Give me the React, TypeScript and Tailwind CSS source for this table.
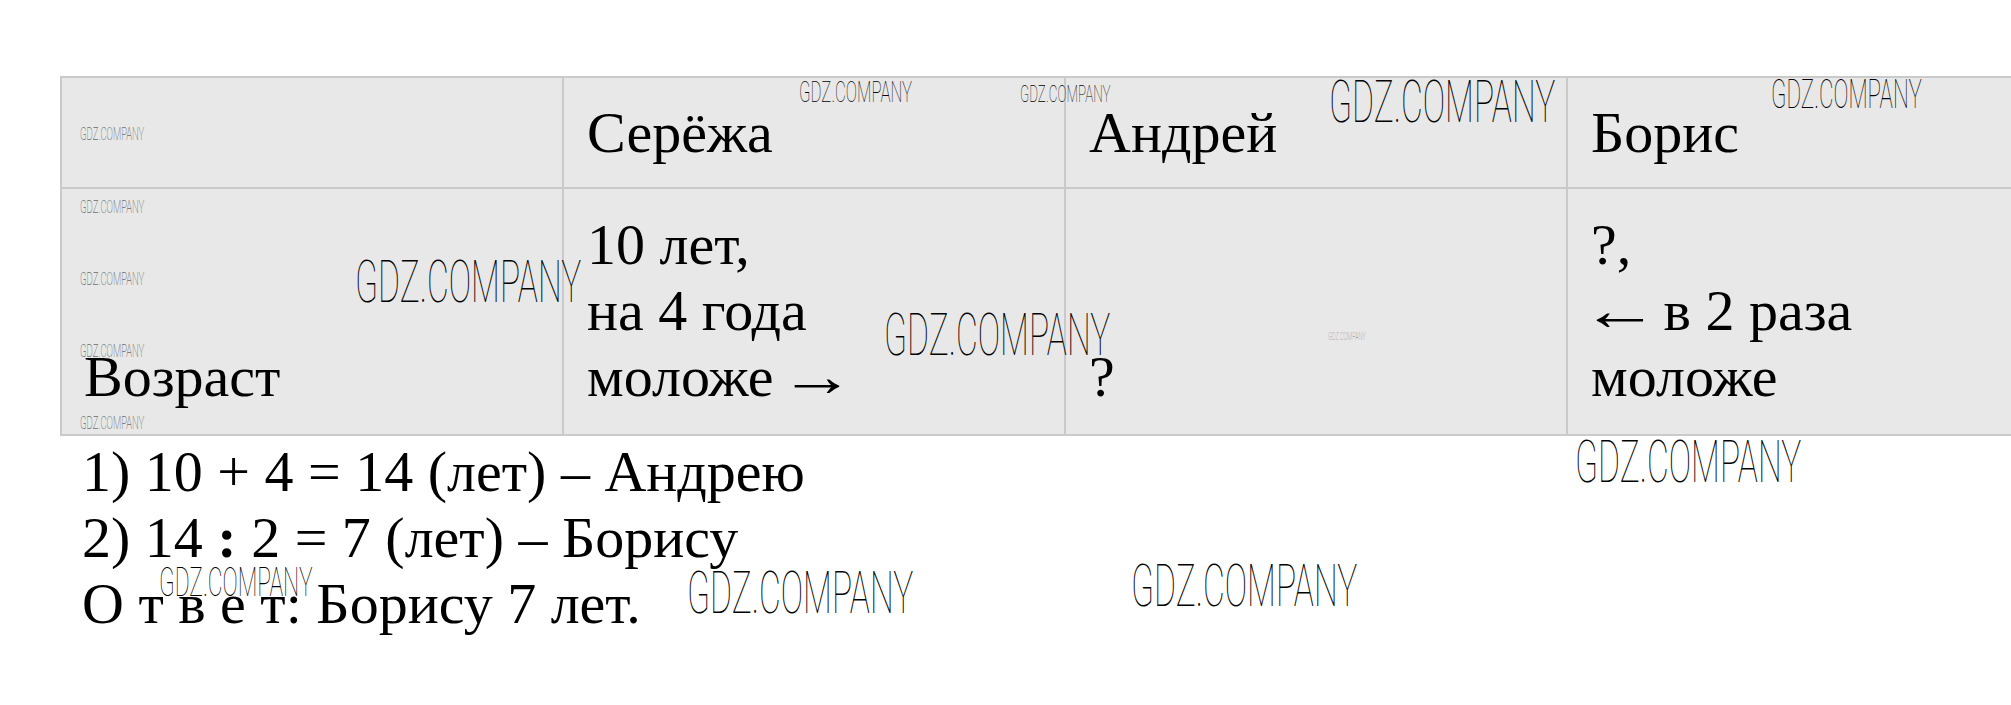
import React from "react";

const serif = "font-['Liberation_Serif','Times_New_Roman',serif]";

function Wm({ className }: { className: string }) {
  return (
    <span
      className={
        "pointer-events-none absolute whitespace-nowrap font-['Roboto','Inter',sans-serif] font-thin leading-none origin-top-left " +
        className
      }
    >
      GDZ.COMPANY
    </span>
  );
}

function HeadCell({ children, first }: { children?: React.ReactNode; first?: boolean }) {
  return (
    <div className={"flex h-[109px] items-center bg-[#e8e8e8] " + (first ? "pl-[22px]" : "pl-[23px]")}>
      {children}
    </div>
  );
}

function BodyCell({ lines, first }: { lines: React.ReactNode[]; first?: boolean }) {
  return (
    <div
      className={
        "flex h-[245px] flex-col justify-end bg-[#e8e8e8] pt-[23px] pb-[24px] " +
        (first ? "pl-[22px]" : "pl-[23px]")
      }
    >
      {lines.map((l, i) => (
        <div key={i} className="whitespace-nowrap">
          {l}
        </div>
      ))}
    </div>
  );
}

export default function App() {
  return (
    <div className={"relative h-[705px] w-[2011px] overflow-hidden bg-white text-black " + serif}>
      <div className="pt-[76px] pl-[60px] text-[58px] leading-[66px]">
        <div className="grid w-max grid-cols-[500px_500px_500px_500px] gap-[2px] bg-[#cacaca] p-[2px]">
          <HeadCell first />
          <HeadCell>Серёжа</HeadCell>
          <HeadCell>Андрей</HeadCell>
          <HeadCell>Борис</HeadCell>
          <BodyCell first lines={["Возраст"]} />
          <BodyCell
            lines={[
              "10 лет,",
              "на 4 года",
              <>
                моложе <span className="inline-block origin-center scale-x-[1.3]">→</span>
              </>,
            ]}
          />
          <BodyCell lines={["?"]} />
          <BodyCell
            lines={[
              "?,",
              <>
                <span className="inline-block origin-center scale-x-[1.35]">←</span> в 2 раза
              </>,
              "моложе",
            ]}
          />
        </div>
        <div className="mt-[3px] pl-[22px]">
          <div className="whitespace-nowrap">1) 10 + 4 = 14 (лет) – Андрею</div>
          <div className="whitespace-nowrap">
            2) 14 <span className="font-bold">:</span> 2 = 7 (лет) – Борису
          </div>
          <div className="whitespace-nowrap">О т в е т: Борису 7 лет.</div>
        </div>
      </div>

      {/* watermarks (overlay) */}
      <Wm className="left-[355px] top-[252px] text-[60px] scale-x-[0.56]" />
      <Wm className="left-[884px] top-[305px] text-[60px] scale-x-[0.56]" />
      <Wm className="left-[1329px] top-[72px] text-[60px] scale-x-[0.56]" />
      <Wm className="left-[1575px] top-[432px] text-[60px] scale-x-[0.56]" />
      <Wm className="left-[687px] top-[563px] text-[60px] scale-x-[0.56]" />
      <Wm className="left-[1131px] top-[556px] text-[60px] scale-x-[0.56]" />
      <Wm className="left-[799px] top-[77px] text-[30px] scale-x-[0.56]" />
      <Wm className="left-[1020px] top-[82px] text-[24px] scale-x-[0.56]" />
      <Wm className="left-[1771px] top-[75px] text-[40px] scale-x-[0.56]" />
      <Wm className="left-[159px] top-[563px] text-[40px] scale-x-[0.57]" />
      <Wm className="left-[80px] top-[125px] text-[18px] scale-x-[0.53] text-[#333]" />
      <Wm className="left-[80px] top-[198px] text-[18px] scale-x-[0.53] text-[#333]" />
      <Wm className="left-[80px] top-[270px] text-[18px] scale-x-[0.53] text-[#333]" />
      <Wm className="left-[80px] top-[342px] text-[18px] scale-x-[0.53] text-[#333]" />
      <Wm className="left-[80px] top-[414px] text-[18px] scale-x-[0.53] text-[#333]" />
      <Wm className="left-[1328px] top-[332px] text-[10px] scale-x-[0.56] text-[#777]" />
    </div>
  );
}
